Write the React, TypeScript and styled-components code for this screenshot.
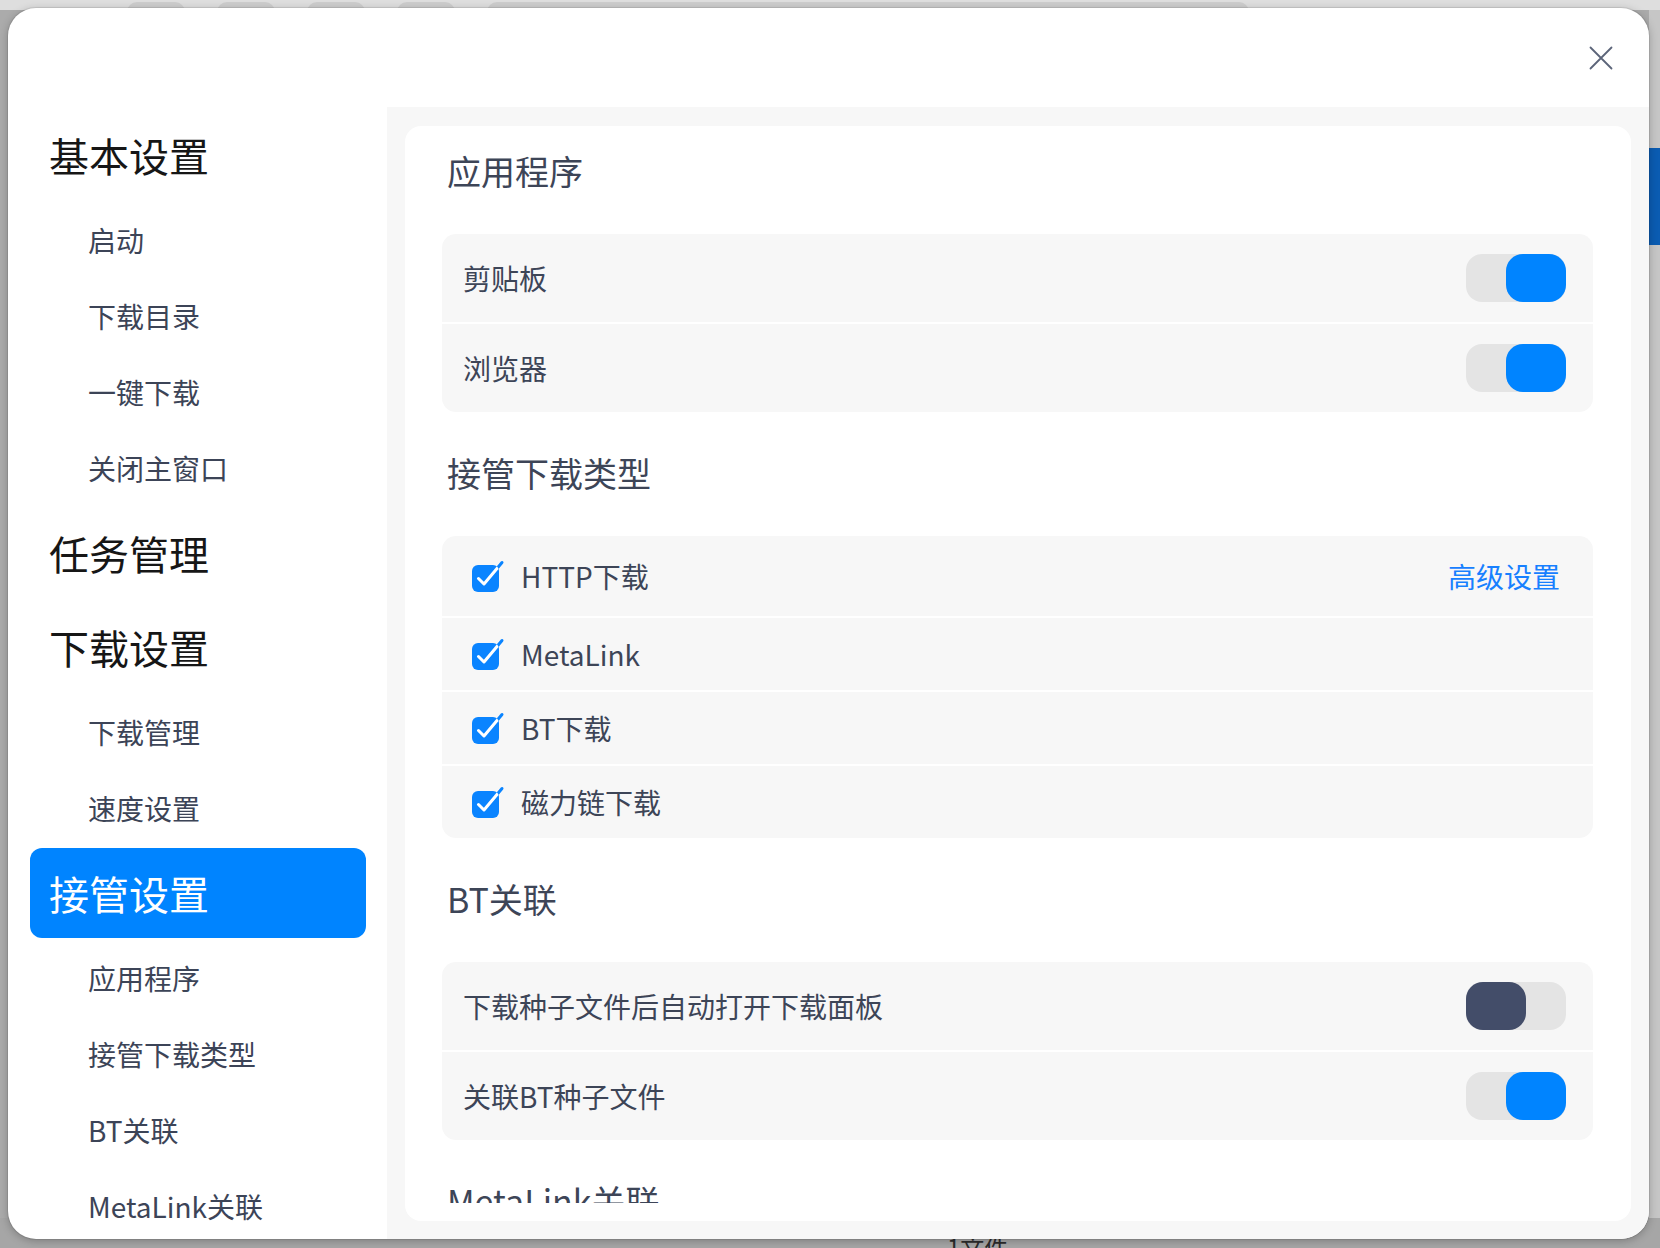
import React from 'react';
import styled, { createGlobalStyle } from 'styled-components';

const GlobalStyle = createGlobalStyle`
  html, body {
    margin: 0;
    padding: 0;
  }
  body {
    font-family: "Noto Sans CJK SC", "Noto Sans", sans-serif;
  }
  * {
    box-sizing: border-box;
  }
`;

const Page = styled.div`
  position: relative;
  width: 1660px;
  height: 1248px;
  overflow: hidden;
`;

// dimmed app behind the modal
const BackApp = styled.div`
  display: grid;
  grid-template-rows: 10px 1fr 30px;
  height: 100%;
  background: #ababab;
`;

const BackTabs = styled.div`
  display: flex;
  gap: 32px;
  padding-left: 127px;
  background: #dedede;
`;

const BackTab = styled.div<{ $w: number }>`
  width: ${(p) => p.$w}px;
  height: 10px;
  margin-top: 2px;
  border-radius: 12px 12px 0 0;
  background: #cdcdcd;
`;

const BackBody = styled.div`
  display: flex;
  justify-content: flex-end;
`;

const BackEdge = styled.div`
  width: 11px;
  background: #c6c6c6;
  padding-top: 138px;
`;

const BackBlue = styled.div`
  height: 97px;
  background: #0b5cb2;
`;

const BackFooter = styled.div`
  padding-left: 947px;
  padding-top: 14px;
  font-size: 24px;
  line-height: 30px;
  color: #2c2c2c;
  background: #a6a6a6;
`;

const Dialog = styled.div`
  position: absolute;
  left: 8px;
  top: 8px;
  width: 1641px;
  height: 1231px;
  display: grid;
  grid-template-columns: 379px 1fr;
  grid-template-rows: 99px 1fr;
  background: #ffffff;
  border-radius: 28px;
  overflow: hidden;
  box-shadow: 0 0 0 1px rgba(0, 0, 0, 0.08), 0 2px 8px rgba(0, 0, 0, 0.25);
`;

const Header = styled.div`
  grid-column: 1 / -1;
  display: flex;
  align-items: center;
  justify-content: flex-end;
  padding-right: 36px;
`;

const CloseButton = styled.button`
  width: 24px;
  height: 24px;
  padding: 0;
  border: none;
  background: none;
  display: flex;
  cursor: pointer;
`;

const Sidebar = styled.nav`
  display: flex;
  flex-direction: column;
  padding: 1px 21px 0 22px;
  overflow: hidden;
  min-height: 0;
`;

const NavItem = styled.div<{ $head?: boolean; $active?: boolean }>`
  flex: none;
  display: flex;
  align-items: center;
  height: ${(p) => (p.$head ? 90 : 76)}px;
  margin: ${(p) => (p.$head ? '2px 0' : '0')};
  padding-left: ${(p) => (p.$head ? 19 : 58)}px;
  font-size: ${(p) => (p.$head ? 40 : 28)}px;
  color: ${(p) => (p.$active ? '#ffffff' : p.$head ? '#161616' : '#3c4457')};
  background: ${(p) => (p.$active ? '#0084ff' : 'transparent')};
  border-radius: 12px;
  white-space: nowrap;
`;

const Content = styled.main`
  background: #f7f7f7;
  padding: 19px 18px 18px 18px;
  min-height: 0;
`;

const Card = styled.div`
  height: 100%;
  display: flex;
  flex-direction: column;
  background: #ffffff;
  border-radius: 16px;
  padding: 0 38px 18px 37px;
`;

const Scroll = styled.div`
  flex: 1;
  min-height: 0;
  overflow: hidden;
  padding-top: 23px;
`;

const Section = styled.section`
  & + & {
    margin-top: 39px;
  }
`;

const SectionTitle = styled.h3`
  margin: 0 0 37px;
  padding-left: 5px;
  height: 48px;
  font-size: 34px;
  line-height: 44px;
  font-weight: 400;
  color: #3d4557;
  white-space: nowrap;
`;

const Group = styled.div`
  display: flex;
  flex-direction: column;
  gap: 2px;
  border-radius: 14px;
  overflow: hidden;
`;

const Row = styled.div<{ $h: number }>`
  display: flex;
  align-items: center;
  height: ${(p) => p.$h}px;
  padding: 0 27px 0 21px;
  background: #f7f7f7;
  font-size: 28px;
  color: #3d4557;
`;

const Label = styled.span`
  flex: 1;
  white-space: nowrap;
`;

const CheckWrap = styled.span`
  display: flex;
  margin: 0 16px 0 8px;
`;

const LinkText = styled.a`
  margin-right: 6px;
  color: #1780ff;
  font-size: 28px;
  text-decoration: none;
  cursor: pointer;
`;

const Track = styled.div<{ $on: boolean }>`
  display: flex;
  justify-content: ${(p) => (p.$on ? 'flex-end' : 'flex-start')};
  width: 100px;
  height: 48px;
  border-radius: 16px;
  background: #e4e4e4;
`;

const Knob = styled.div<{ $on: boolean }>`
  width: 60px;
  height: 48px;
  border-radius: 17px;
  background: ${(p) => (p.$on ? '#0084ff' : '#434d69')};
`;

const Toggle = ({ on }: { on: boolean }) => (
  <Track $on={on}>
    <Knob $on={on} />
  </Track>
);

const CheckIcon = ({ id }: { id: string }) => (
  <svg width="34" height="34" viewBox="0 0 34 34">
    <defs>
      <clipPath id={id}>
        <rect x="1" y="6" width="27" height="27" rx="6" />
      </clipPath>
    </defs>
    <rect x="1" y="6" width="27" height="27" rx="6" fill="#0a84ff" />
    <path d="M7.5 19.5 L13 25 L31 3.5" fill="none" stroke="#0a84ff" strokeWidth="3" strokeLinecap="round" strokeLinejoin="round" />
    <path d="M7.5 19.5 L13 25 L31 3.5" fill="none" stroke="#ffffff" strokeWidth="3" strokeLinecap="round" strokeLinejoin="round" clipPath={`url(#${id})`} />
  </svg>
);

const navItems: { text: string; head?: boolean; active?: boolean }[] = [
  { text: '基本设置', head: true },
  { text: '启动' },
  { text: '下载目录' },
  { text: '一键下载' },
  { text: '关闭主窗口' },
  { text: '任务管理', head: true },
  { text: '下载设置', head: true },
  { text: '下载管理' },
  { text: '速度设置' },
  { text: '接管设置', head: true, active: true },
  { text: '应用程序' },
  { text: '接管下载类型' },
  { text: 'BT关联' },
  { text: 'MetaLink关联' },
];

const downloadTypes = ['HTTP下载', 'MetaLink', 'BT下载', '磁力链下载'];

const App = () => {
  return (
    <Page>
      <GlobalStyle />
      <BackApp>
        <BackTabs>
          <BackTab $w={58} />
          <BackTab $w={58} />
          <BackTab $w={58} />
          <BackTab $w={58} />
          <BackTab $w={762} />
        </BackTabs>
        <BackBody>
          <BackEdge>
            <BackBlue />
          </BackEdge>
        </BackBody>
        <BackFooter>1文件</BackFooter>
      </BackApp>

      <Dialog>
        <Header>
          <CloseButton aria-label="关闭">
            <svg width="24" height="24" viewBox="0 0 24 24">
              <path d="M1.5 1.5 L22.5 22.5 M22.5 1.5 L1.5 22.5" stroke="#5b6479" strokeWidth="1.8" strokeLinecap="round" />
            </svg>
          </CloseButton>
        </Header>

        <Sidebar>
          {navItems.map((item) => (
            <NavItem key={item.text} $head={item.head} $active={item.active}>
              {item.text}
            </NavItem>
          ))}
        </Sidebar>

        <Content>
          <Card>
            <Scroll>
              <Section>
                <SectionTitle>应用程序</SectionTitle>
                <Group>
                  <Row $h={88}>
                    <Label>剪贴板</Label>
                    <Toggle on />
                  </Row>
                  <Row $h={88}>
                    <Label>浏览器</Label>
                    <Toggle on />
                  </Row>
                </Group>
              </Section>

              <Section>
                <SectionTitle>接管下载类型</SectionTitle>
                <Group>
                  {downloadTypes.map((name, index) => (
                    <Row key={name} $h={index === 0 ? 80 : 72}>
                      <CheckWrap>
                        <CheckIcon id={`chk-${index}`} />
                      </CheckWrap>
                      <Label>{name}</Label>
                      {index === 0 && <LinkText>高级设置</LinkText>}
                    </Row>
                  ))}
                </Group>
              </Section>

              <Section>
                <SectionTitle>BT关联</SectionTitle>
                <Group>
                  <Row $h={88}>
                    <Label>下载种子文件后自动打开下载面板</Label>
                    <Toggle on={false} />
                  </Row>
                  <Row $h={88}>
                    <Label>关联BT种子文件</Label>
                    <Toggle on />
                  </Row>
                </Group>
              </Section>

              <Section>
                <SectionTitle>MetaLink关联</SectionTitle>
              </Section>
            </Scroll>
          </Card>
        </Content>
      </Dialog>
    </Page>
  );
};

export default App;
